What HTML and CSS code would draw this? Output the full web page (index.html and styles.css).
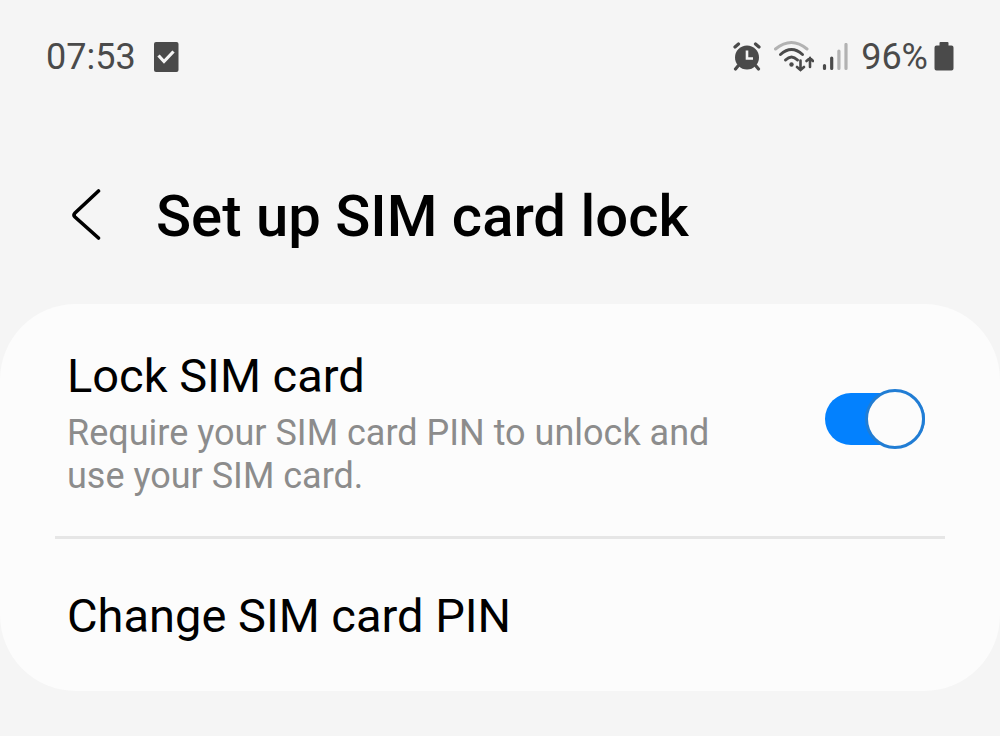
FILE: index.html
```html
<!DOCTYPE html>
<html lang="en">
<head>
    <meta charset="UTF-8">
    <meta name="viewport" content="width=device-width, initial-scale=1.0">
    <title>Set up SIM card lock</title>
    <link rel="stylesheet" href="styles.css">
</head>
<body>
    <div class="status-bar">
        <span class="time">07:53</span>
        <svg class="icon-task" width="26" height="32" viewBox="0 0 26 32" aria-hidden="true">
            <rect x="1" y="1" width="24.500" height="30" rx="2" fill="#4a4a4a"/>
            <path d="M5.500 14.500l5.500 6 9.500-10" fill="none" stroke="#f5f5f5" stroke-width="3.200"/>
        </svg>

        <div class="status-icons">
            <svg width="32" height="30" viewBox="0 0 32 30" aria-hidden="true">
                <circle cx="14" cy="15.500" r="12" fill="#4a4a4a"/>
                <path d="M2 5l3.500-3M26 5l-3.500-3M5 24l-2.500 3M23 24l2.500 3" fill="none" stroke="#4a4a4a" stroke-width="3.200" stroke-linecap="round"/>
                <path d="M14 8.500v8h6" fill="none" stroke="#f5f5f5" stroke-width="2.600"/>
            </svg>
            <svg width="41" height="34" viewBox="0 0 41 34" aria-hidden="true">
                <g fill="none" stroke="#4a4a4a" stroke-linecap="round">
                    <path d="M2.500 9Q18.500-4 34 9" stroke="#b2b2b2" stroke-width="3"/>
                    <path d="M7.500 14.500Q18.500 4.500 29.500 14.500" stroke-width="3"/>
                    <path d="M12.500 20Q18.500 14 24.500 20" stroke-width="3"/>
                    <path d="M27.500 20.500v9.500M24 27l3.500 3 3.500-3M37 27V18M33.500 21l3.500-3 3 3" stroke-width="2.600"/>
                </g>
                <circle cx="18.500" cy="24.500" r="2.200" fill="#4a4a4a"/>
            </svg>
            <svg width="31" height="28" viewBox="0 0 31 28" aria-hidden="true">
                <g fill="none" stroke="#4a4a4a" stroke-width="3.200" stroke-linecap="round">
                    <path d="M2.500 22.500v3M9.700 15v10.500"/>
                    <path d="M16.900 8v17.500M24 1.500v24" stroke="#b2b2b2"/>
                </g>
            </svg>
            <span class="battery">96%</span>
            <svg width="20" height="30" viewBox="0 0 20 30" aria-hidden="true">
                <path d="M6.500 0h7q1 0 1 1v2.500h3q2 0 2 2v21q0 2-2 2h-15q-2 0-2-2V5.500q0-2 2-2h3V1q0-1 1-1z" fill="#4a4a4a"/>
            </svg>
        </div>
    </div>

    <header class="header">
        <button class="back" type="button" aria-label="Back">
            <svg width="30" height="52" viewBox="0 0 30 52" aria-hidden="true">
                <path d="M27.500 2L4 24q-2 2 0 4l23.500 21" fill="none" stroke="#000" stroke-width="3.600" stroke-linecap="round"/>
            </svg>
        </button>
        <h1>Set up SIM card lock</h1>
    </header>

    <main class="card">
        <div class="row">
            <div class="row-text">
                <label for="lockSim">Lock SIM card</label>
                <p id="lockHint">Require your SIM card PIN to unlock and use your SIM card.</p>
            </div>
            <input class="switch" type="checkbox" role="switch" id="lockSim" aria-describedby="lockHint" checked>
        </div>
        <hr>
        <button class="row-button" type="button">Change SIM card PIN</button>
    </main>
</body>
</html>
```
FILE: styles.css
```css
*, *::before { box-sizing: border-box; }
body { font-family: Roboto, sans-serif; margin: 0; background-color: #f5f5f5; color: #000; }
svg { display: block; flex: none; }
button { font: inherit; color: inherit; background: none; border: 0; padding: 0; cursor: pointer; }

.status-bar { display: flex; align-items: center; height: 114px; padding: 0 46px; font-size: 36px; line-height: 42px; color: #4a4a4a; }
.icon-task { margin-left: 17px; }
.status-icons { display: flex; align-items: center; gap: 8px; margin-left: auto; }
.battery { margin-right: -2px; }

.header { display: flex; align-items: flex-start; gap: 55px; min-height: 190px; padding: 66px 71px 0; }
.back { padding: 9px 0; }
h1 { margin: 0; font-size: 58px; font-weight: 500; line-height: 72px; }

.card { background-color: #fcfcfc; border-radius: 76px; padding: 44px 55px 0; }
.row { display: flex; align-items: flex-start; justify-content: space-between; padding: 0 20px 38px 12px; }
.row-text { max-width: 660px; }
label { display: block; font-size: 47px; line-height: 56px; cursor: pointer; }
p { margin: 8px 0 0; font-size: 36px; line-height: 43px; color: #8c8c8c; }
hr { height: 3px; margin: 0; border: 0; background-color: #e6e6e6; }
.row-button { display: block; width: 100%; padding: 49px 12px 47px; font-size: 47px; line-height: 56px; text-align: left; }

.switch { appearance: none; position: relative; flex: none; width: 100px; height: 52px; margin: 45px 0 0; border-radius: 26px; background-color: #b2b2b2; cursor: pointer; }
.switch::before { content: ""; position: absolute; top: -4px; left: 0; width: 60px; height: 60px; border: 3px solid #b2b2b2; border-radius: 50%; background-color: #fcfcfc; }
.switch:checked { background-color: #0381fe; }
.switch:checked::before { left: auto; right: 0; border-color: #217dd4; }
```
